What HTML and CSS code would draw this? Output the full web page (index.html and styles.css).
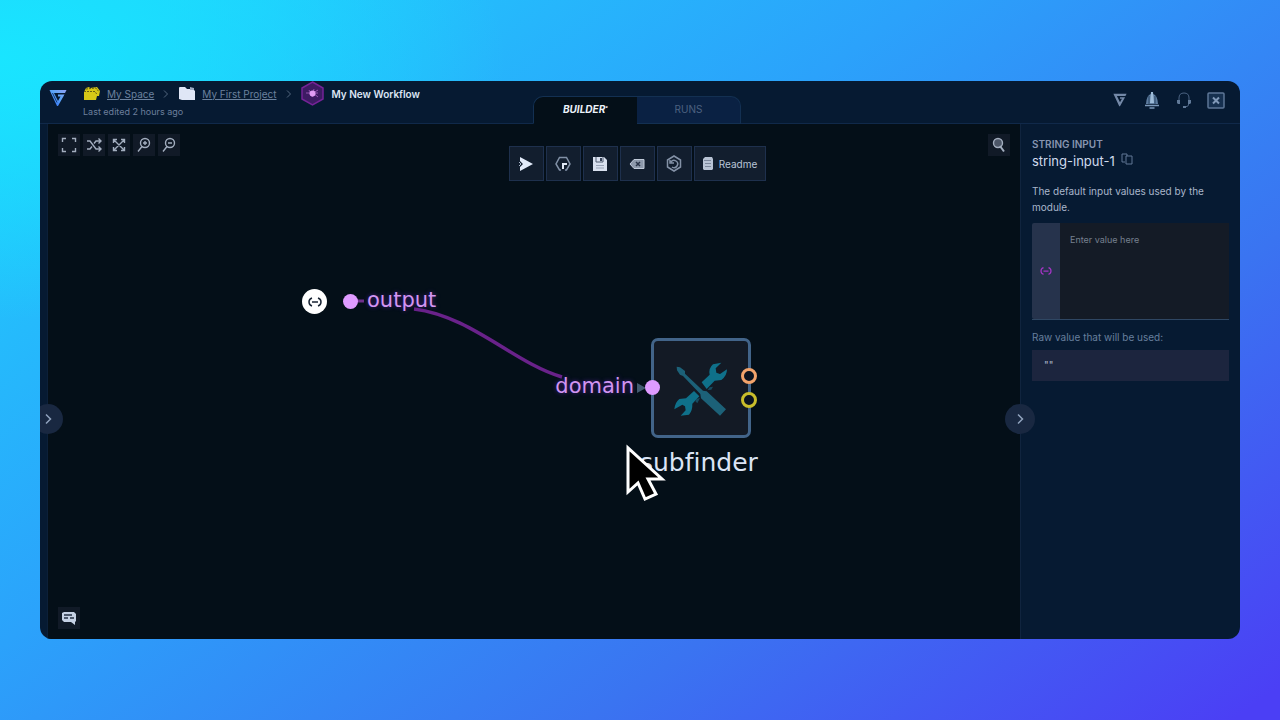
FILE: index.html
```html
<!DOCTYPE html>
<html lang="en">
<head>
<meta charset="utf-8">
<meta name="viewport" content="width=device-width, initial-scale=1">
<title>My New Workflow</title>
<link rel="stylesheet" href="styles.css">
</head>
<body>
<main class="window">
  <header class="header">
    <div class="header-left">
      <svg class="brand" width="18" height="18" viewBox="0 0 18 18" role="img" aria-label="Home">
        <defs><linearGradient id="brand-fill" x1="0" y1="1" x2="1" y2="0"><stop offset="0" stop-color="#2867ff"/><stop offset=".55" stop-color="#5aa4f5"/><stop offset="1" stop-color="#91a2f6"/></linearGradient></defs>
        <path d="M0.500 1H17.500L16 4H5L9 12L11.500 7.500H9V5.500H15.500L9 17H8Z" fill="url(#brand-fill)"/>
        <path d="M3.500 4L8 13.500" fill="none" stroke="#12376d" stroke-width="1"/>
      </svg>
      <div class="titles">
        <nav class="crumbs" aria-label="Breadcrumb">
          <a class="crumb" href="#space">
            <svg width="18" height="15" viewBox="0 0 18 15" aria-hidden="true"><path d="M1 14V6l2-4 3-1 1 1 7-1 3 4-1 5h-2l-1 4z" fill="#d6c817"/><path d="M1 5.500h11l2 3M3 3l10-1 3 4" fill="none" stroke="#665f13" stroke-width="1" stroke-dasharray="2 1"/></svg>
            <span class="crumb-text">My Space</span>
          </a>
          <svg class="sep" width="6" height="8" viewBox="0 0 6 8" aria-hidden="true"><path d="M1 0.500l3.500 3.500L1 7.500"/></svg>
          <a class="crumb" href="#project">
            <svg width="18" height="15" viewBox="0 0 18 15" aria-hidden="true"><path d="M1 13V2q0-1 1-1h5l2 2h6l2 2v9H4z" fill="#dfe6f6"/><path d="M12 1l4 1v2h-4z" fill="#9eabc3"/></svg>
            <span class="crumb-text">My First Project</span>
          </a>
          <svg class="sep" width="6" height="8" viewBox="0 0 6 8" aria-hidden="true"><path d="M1 0.500l3.500 3.500L1 7.500"/></svg>
          <span class="crumb-current">
            <svg width="23" height="25" viewBox="0 0 23 25" aria-hidden="true"><path d="M11.500 1L22 7v11l-10.500 6L1 18V7z" fill="#3d1b63" stroke="#752397" stroke-width="1.500"/><path d="M5 12h12M8 9l4 7M17 9l-5 3 5 4M13 8l-2 8" stroke="#9754b3" fill="none"/><circle cx="11.500" cy="12.500" r="3" fill="#e29df5"/></svg>
            <span>My New Workflow</span>
          </span>
        </nav>
        <p class="edited">Last edited 2 hours ago</p>
      </div>
    </div>
    <div class="tabs" role="tablist">
      <button class="tab tab-active" role="tab" aria-selected="true">BUILDER<span class="mark">•</span></button>
      <button class="tab" role="tab" aria-selected="false">RUNS</button>
    </div>
    <div class="header-right">
      <button class="plain" aria-label="Getting started"><svg width="14" height="14" viewBox="0 0 18 18"><path d="M0.500 1H17.500L16 4H5L9 12L11.500 7.500H9V5.500H15.500L9 17H8Z" fill="#7388a7"/></svg></button>
      <button class="plain" aria-label="Notifications"><svg width="16" height="18" viewBox="0 0 16 18"><path d="M2 13Q2.500 4 7 3V1h2v2q4.500 1 5 10z" fill="#5d7c9f"/><path d="M7 1h2l1 11H6z" fill="#9dbbd8"/><path d="M5 5v8M11 5v8" stroke="#2b4666"/><path d="M1 14.500h14M5.500 17h5" stroke="#7b98b9" stroke-width="1.500"/></svg></button>
      <button class="plain" aria-label="Support"><svg width="16" height="17" viewBox="0 0 16 17"><path d="M3 8V6q0-5 5-5t5 5v2M13 11q0 4-4 4" fill="none" stroke="#4b6382" stroke-width="1"/><path d="M1 8h3v4H2l-1-1zM12 8h3v3l-1 1h-2zM7 14h3v2H7z" fill="#607998"/></svg></button>
      <button class="plain" aria-label="Close"><svg width="18" height="17" viewBox="0 0 18 17"><rect x="1" y="1" width="16" height="15" rx="1" fill="#16304f" stroke="#5d7696" stroke-width="1.500"/><path d="M6 5.500l6 6M12 5.500l-6 6" stroke="#8199b8" stroke-width="2"/></svg></button>
    </div>
  </header>

  <div class="workspace">
    <aside class="rail">
      <button class="collapse" aria-label="Expand library"><svg width="8" height="12" viewBox="0 0 8 12"><path d="M2 1.500L6.500 6L2 10.500"/></svg></button>
    </aside>
    <section class="canvas" aria-label="Workflow canvas">
      <div class="canvas-bar">
        <div class="view-tools">
          <button class="tool" aria-label="Fit to screen"><svg viewBox="0 0 16 16"><path d="M1.500 5V1.500H5M11 1.500h3.500V5M14.500 11v3.500H11M5 14.500H1.500V11"/></svg></button>
          <button class="tool" aria-label="Shuffle"><svg viewBox="0 0 16 16"><path d="M1 4h3l6 8h5M1 12h3l2-2.500M8 6.500L10 4h5M12.500 1.500L15 4l-2.500 2.500M12.500 9.500L15 12l-2.500 2.500"/></svg></button>
          <button class="tool" aria-label="Expand"><svg viewBox="0 0 16 16"><path d="M3 3l10 10M13 3L3 13M2.500 6V2.500H6M10 2.500h3.500V6M13.500 10v3.500H10M6 13.500H2.500V10"/></svg></button>
          <button class="tool" aria-label="Zoom in"><svg viewBox="0 0 16 16"><circle cx="9" cy="6" r="4.500"/><path d="M6 9.500L2 14.500M7 6h4M9 4v4"/></svg></button>
          <button class="tool" aria-label="Zoom out"><svg viewBox="0 0 16 16"><circle cx="9" cy="6" r="4.500"/><path d="M6 9.500L2 14.500M7 6h4"/></svg></button>
        </div>
        <button class="tool" aria-label="Search"><svg viewBox="0 0 16 16"><circle cx="7" cy="6" r="4.500" fill="#4c5667"/><path d="M9 9l4 5.500" stroke-width="2"/></svg></button>
      </div>

      <svg class="edges" width="973" height="515" viewBox="0 0 973 515" aria-hidden="true">
        <path d="M304 177H316" stroke="#70308c" stroke-width="3"/>
        <path d="M366 185C423 192 466 239 514 253" fill="none" stroke="#6a228a" stroke-width="3.500"/>
        <path d="M589 259l9 5-9 5z" fill="#425a70"/>
      </svg>
      <div class="source-node">
        <svg width="14" height="12" viewBox="0 0 14 12" aria-label="String input" role="img"><path d="M4 2Q1 3 1 6t3 4M10 2q3 1 3 4t-3 4M4 6h6" fill="none" stroke="#182333" stroke-width="1.500"/></svg>
      </div>
      <span class="port port-output"></span>
      <span class="port-label label-output">output</span>
      <span class="port-label label-domain">domain</span>
      <div class="tool-node">
        <svg width="56" height="58" viewBox="40 40 168 174" aria-hidden="true">
          <path d="M126 110L150 87Q146 68 160 56L185 51L168 68L170 81L181 85L202 71Q202 91 185 103L165 105L141 130Z" fill="#0f708a"/>
          <path d="M103 136L119 152L98 174Q99 194 88 207L63 210L78 194L76 182L68 177L44 191Q46 170 59 160L79 158Z" fill="#0f708a"/>
          <path d="M144 133l6-8 10-2-5 9zM107 167l3-7 11-3-8 16z" fill="#174b60"/>
          <path d="M51 63L61 65L76 76L76 84L130 135L141 137L199 191L181 210L124 158L122 145L70 91L61 87L52 74Z" fill="#1c6178"/>
        </svg>
      </div>
      <span class="port port-domain"></span>
      <span class="ring ring-file"></span>
      <span class="ring ring-folder"></span>
      <span class="node-name">subfinder</span>
      <svg class="pointer" width="42" height="60" viewBox="0 0 42 60" aria-hidden="true"><path d="M3 5V49L13 40L20 56L31 51L23 36H37Z" fill="#000" stroke="#fff" stroke-width="3"/></svg>

      <button class="tool chat" aria-label="Messages"><svg viewBox="0 0 16 16"><path d="M1 3l2-1h10l2 2v7l-1 1v3l-4-3H3l-2-2z" fill="#c6d2e5" stroke="none"/><path d="M3 5h8M3 8h4M9 8h4" stroke="#253044"/></svg></button>
    </section>

    <aside class="sidebar">
      <button class="collapse" aria-label="Collapse details"><svg width="8" height="12" viewBox="0 0 8 12"><path d="M2 1.500L6.500 6L2 10.500"/></svg></button>
      <h2 class="kind">STRING INPUT</h2>
      <div class="name-row">
        <span>string-input-1</span>
        <button class="plain" aria-label="Copy name"><svg width="12" height="12" viewBox="0 0 12 12"><path d="M4 9H1V1h5v2M5 3h6v8H5z" fill="none" stroke="#607795"/></svg></button>
      </div>
      <label class="help" for="value">The default input values used by the module.</label>
      <div class="field">
        <span class="field-type"><svg width="12" height="10" viewBox="0 0 14 12" aria-hidden="true"><path d="M4 2Q1 3 1 6t3 4M10 2q3 1 3 4t-3 4M4 6h6" fill="none" stroke="#a335c4" stroke-width="1.500"/></svg></span>
        <textarea class="field-input" id="value" placeholder="Enter value here"></textarea>
      </div>
      <p class="raw-label">Raw value that will be used:</p>
      <output class="raw" for="value">""</output>
    </aside>

    <div class="toolbar" role="toolbar" aria-label="Workflow actions">
      <button class="action" aria-label="Run"><svg width="16" height="16" viewBox="0 0 16 16"><path d="M2 1l13 7-13 7V11l3-3-3-3z" fill="#e2ebfa"/><path d="M1 6l2 2-2 2" fill="none" stroke="#a9b6ca"/></svg></button>
      <button class="action" aria-label="Schedule"><svg width="16" height="16" viewBox="0 0 16 16"><path d="M6 14H4.500L1 8l3.500-6.500h7L15 8l-3.500 6H10" fill="none" stroke="#8190a6" stroke-width="1.500"/><path d="M8 13V8h4" fill="none" stroke="#e0e8f5" stroke-width="2"/></svg></button>
      <button class="action" aria-label="Save"><svg width="16" height="16" viewBox="0 0 16 16"><path d="M1 1h11l3 3v11H1z" fill="#d9e1ef"/><path d="M4 1v5h7V1" fill="none" stroke="#4e5a6f"/><path d="M4 9.500h8M4 12h8" fill="none" stroke="#9aa5b8"/><path d="M8 2h2v3H8z" fill="#364258"/></svg></button>
      <button class="action" aria-label="Clear"><svg width="16" height="12" viewBox="0 0 16 12"><path d="M1 6l4-4.500h10v9H5z" fill="#8d99ab" stroke="#c0cad9"/><path d="M7 4l4 4M11 4L7 8" stroke="#293448" stroke-width="1.500"/></svg></button>
      <button class="action" aria-label="Reset"><svg width="16" height="17" viewBox="0 0 16 17"><path d="M8 1l6.500 4v7L8 16l-6.500-4V5z" fill="none" stroke="#8391a6" stroke-width="1.500"/><path d="M5 7q2-3 5-1t1 5-5 1M4 5v3h4" fill="none" stroke="#8391a6" stroke-width="1.500"/></svg></button>
      <button class="action action-wide"><svg width="12" height="15" viewBox="0 0 12 15" aria-hidden="true"><path d="M3 1h7l1 2v10l-1 1H2l-1-1V3z" fill="#b8c3d4"/><path d="M2 4.500h7M3 7.500h6M3 10.500h6" stroke="#7a869a"/></svg>Readme</button>
    </div>
  </div>
</main>
</body>
</html>
```
FILE: styles.css
```css
* { box-sizing: border-box; }

body {
  margin: 0;
  min-height: 100vh;
  display: flex;
  padding: 81px 40px;
  font-family: Inter, "Open Sans", sans-serif;
  font-size: 10px;
  color: #b4c1d6;
  background:
    radial-gradient(ellipse at 0% 8%, #19e5ff 0%, rgba(25, 229, 255, 0) 28%),
    linear-gradient(145deg, #20cefd 6%, #2ba2fb 40%, #3a74f1 70%, #4b3ff5 98%);
}

button {
  font: inherit;
  color: inherit;
  padding: 0;
  border: 0;
  background: none;
}

svg { flex: none; display: block; }

.window {
  flex: 1;
  min-width: 0;
  display: flex;
  flex-direction: column;
  overflow: hidden;
  border-radius: 12px;
  background: #061a32;
}

.header {
  min-height: 43px;
  display: grid;
  grid-template-columns: 1fr auto 1fr;
  border-bottom: 1px solid #10294a;
}

.header-left {
  display: flex;
  gap: 16px;
  padding-left: 9px;
}

.brand { margin-top: 8px; }

.crumbs, .crumb, .crumb-current {
  display: flex;
  align-items: center;
}

.crumbs { gap: 9px; height: 25px; white-space: nowrap; }
.crumb { gap: 6px; color: #6b819e; text-decoration: none; }
.crumb-text { text-decoration: underline; }
.crumb-current { gap: 8px; font-weight: 600; color: #dce5f4; }
.sep { fill: none; stroke: #52677f; }

.edited { margin: 0; line-height: 12px; color: #6c7f9c; font-size: 9px; }

.tabs {
  display: flex;
  align-self: end;
  margin-right: 6px;
  margin-bottom: -1px;
}

.tab {
  width: 104px;
  height: 28px;
  padding-bottom: 2px;
  border: 1px solid #133052;
  border-left: 0;
  border-radius: 0 10px 0 0;
  background: #0a2143;
  color: #4d6281;
}

.tab-active {
  border-left: 1px solid #133052;
  border-right: 0;
  border-radius: 10px 0 0 0;
  border-bottom-color: #040f18;
  background: #040f18;
  color: #edf2fa;
  font-weight: 700;
  font-style: italic;
}

.mark { font-size: 6px; line-height: 1; vertical-align: super; }

.header-right {
  display: flex;
  align-items: center;
  justify-content: flex-end;
  padding: 0 8px 4px;
}

.header-right .plain {
  width: 32px;
  display: grid;
  place-items: center;
}

.workspace {
  flex: 1;
  display: flex;
  position: relative;
}

.rail {
  flex: 0 0 8px;
  position: relative;
  border-right: 1px solid #0c2039;
}

.canvas {
  flex: 1;
  min-width: 0;
  min-height: 380px;
  position: relative;
  overflow: hidden;
  display: flex;
  flex-direction: column;
  justify-content: space-between;
  padding: 10px;
  background: #040f18;
}

.canvas-bar { display: flex; justify-content: space-between; }
.view-tools { display: flex; gap: 3px; }

.tool {
  width: 22px;
  height: 22px;
  display: grid;
  place-items: center;
  background: #111a27;
}

.tool svg {
  width: 16px;
  height: 16px;
  fill: none;
  stroke: #a3aebf;
  stroke-width: 1.4;
}

.edges { position: absolute; left: 0; top: 0; }

.source-node {
  position: absolute;
  left: 254px;
  top: 165px;
  width: 25px;
  height: 25px;
  display: grid;
  place-items: center;
  border-radius: 50%;
  background: #fff;
}

.port {
  position: absolute;
  width: 15px;
  height: 15px;
  border-radius: 50%;
  background: #df9bff;
}

.port-output { left: 295px; top: 170px; }
.port-domain { left: 597px; top: 256px; }

.port-label {
  position: absolute;
  line-height: 24px;
  font-family: "DejaVu Sans", sans-serif;
  font-size: 21px;
  color: #d295f2;
  text-shadow: 0 0 4px #48208a;
}

.label-output { left: 319px; top: 164px; }
.label-domain { right: 386px; top: 250px; }

.tool-node {
  position: absolute;
  left: 603px;
  top: 214px;
  width: 100px;
  height: 100px;
  display: grid;
  place-items: center;
  border: 3px solid #426489;
  border-radius: 7px;
  background: #131a25;
}

.ring {
  position: absolute;
  width: 16px;
  height: 16px;
  border: 3px solid;
  border-radius: 50%;
  background: #0b1320;
}

.ring-file { left: 693px; top: 244px; border-color: #f2a36b; }
.ring-folder { left: 693px; top: 268px; border-color: #c9bd2b; }

.node-name {
  position: absolute;
  left: 592px;
  top: 325px;
  line-height: 28px;
  font-family: "DejaVu Sans", sans-serif;
  font-size: 25px;
  font-variant-ligatures: none;
  color: #dbe4f5;
}

.pointer { position: absolute; left: 577px; top: 319px; }

.collapse {
  position: absolute;
  z-index: 2;
  left: -16px;
  top: 280px;
  width: 30px;
  height: 30px;
  display: grid;
  place-items: center;
  border-radius: 50%;
  background: #192841;
}

.rail .collapse { left: -7px; }
.collapse svg { fill: none; stroke: #91a3bd; stroke-width: 1.5; }

.sidebar {
  flex: 0 0 220px;
  position: relative;
  display: flex;
  flex-direction: column;
  padding: 14px 11px;
  border-left: 1px solid #10243e;
}

.kind {
  margin: 0;
  font-size: 10px;
  line-height: 13px;
  font-weight: 600;
  color: #8795b0;
}

.name-row {
  display: flex;
  gap: 6px;
  line-height: 20px;
  margin-bottom: 12px;
  font-size: 13px;
  color: #d0dbed;
}

.name-row .plain { height: 16px; }

.help { line-height: 16px; color: #a9b6cb; }

.field {
  display: flex;
  height: 97px;
  margin-top: 8px;
  border-bottom: 1px solid #2f4763;
}

.field-type {
  flex: 0 0 28px;
  display: grid;
  place-items: center;
  border-radius: 2px 0 0 2px;
  background: #26334c;
}

.field-input {
  flex: 1;
  min-width: 0;
  resize: none;
  padding: 10px;
  border: 0;
  background: #141b26;
  color: #b4c1d6;
  font: inherit;
  line-height: 14px;
}

.field-input::placeholder { color: #76808f; opacity: 1; font-size: 9px; }

.raw-label { margin: 10px 0 6px; line-height: 14px; color: #667f9d; }

.raw {
  padding: 8px 12px;
  line-height: 15px;
  background: #1c253e;
  color: #aeb7c9;
}

.toolbar {
  position: absolute;
  top: 22px;
  left: 0;
  right: 6px;
  display: flex;
  justify-content: center;
  gap: 2px;
  pointer-events: none;
}

.action {
  width: 35px;
  height: 35px;
  display: flex;
  align-items: center;
  justify-content: center;
  gap: 5px;
  border: 1px solid #1e304d;
  background: #121e2e;
  pointer-events: auto;
}

.action-wide { width: 72px; color: #b9c5d7; }
```
